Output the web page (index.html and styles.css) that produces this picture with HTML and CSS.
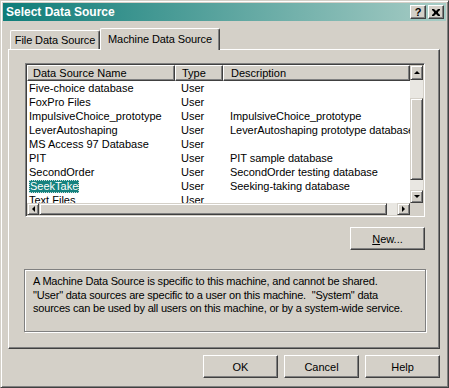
FILE: index.html
```html
<!DOCTYPE html>
<html lang="en">
<head>
  <meta charset="UTF-8">
  <title>Select Data Source</title>
  <link rel="stylesheet" href="styles.css">
</head>
<body>
  <div class="window">
    <div class="titlebar">
      <span class="title">Select Data Source</span>
      <div class="caption-buttons">
        <div class="cap-btn help">?</div>
        <div class="cap-btn">
          <svg width="8" height="7" viewBox="0 0 8 7"><path d="M0 0h2l2 2 2-2h2v1l-2 2v1l2 2v1h-2l-2-2-2 2h-2v-1l2-2v-1l-2-2z" fill="#000"/></svg>
        </div>
      </div>
    </div>

    <div class="client">
      <div class="tabs">
        <div class="tab">File Data Source</div>
        <div class="tab active">Machine Data Source</div>
      </div>

      <div class="tab-page">
        <div class="listview">
          <div class="lv-body">
            <div class="lv-header">
              <div class="hcell col-name">Data Source Name</div>
              <div class="hcell col-type">Type</div>
              <div class="hcell col-desc">Description</div>
            </div>
            <div class="lv-row"><span class="col-name">Five-choice database</span><span class="col-type">User</span><span class="col-desc"></span></div>
            <div class="lv-row"><span class="col-name">FoxPro Files</span><span class="col-type">User</span><span class="col-desc"></span></div>
            <div class="lv-row"><span class="col-name">ImpulsiveChoice_prototype</span><span class="col-type">User</span><span class="col-desc">ImpulsiveChoice_prototype</span></div>
            <div class="lv-row"><span class="col-name">LeverAutoshaping</span><span class="col-type">User</span><span class="col-desc">LeverAutoshaping prototype database</span></div>
            <div class="lv-row"><span class="col-name">MS Access 97 Database</span><span class="col-type">User</span><span class="col-desc"></span></div>
            <div class="lv-row"><span class="col-name">PIT</span><span class="col-type">User</span><span class="col-desc">PIT sample database</span></div>
            <div class="lv-row"><span class="col-name">SecondOrder</span><span class="col-type">User</span><span class="col-desc">SecondOrder testing database</span></div>
            <div class="lv-row"><span class="col-name"><span class="selected">SeekTake</span></span><span class="col-type">User</span><span class="col-desc">Seeking-taking database</span></div>
            <div class="lv-row"><span class="col-name">Text Files</span><span class="col-type">User</span><span class="col-desc"></span></div>
          </div>

          <div class="vscroll">
            <div class="sb-btn"><span class="arrow up"></span></div>
            <div class="sb-track v">
              <div class="sb-thumb v"></div>
            </div>
            <div class="sb-btn"><span class="arrow down"></span></div>
          </div>

          <div class="hscroll">
            <div class="sb-btn"><span class="arrow left"></span></div>
            <div class="sb-thumb h"></div>
            <div class="sb-track h"></div>
            <div class="sb-btn"><span class="arrow right"></span></div>
          </div>

          <div class="sb-corner"></div>
        </div>

        <div class="new-row">
          <div class="btn"><u>N</u>ew...</div>
        </div>

        <div class="groupbox">
          A Machine Data Source is specific to this machine, and cannot be shared.<br>
          "User" data sources are specific to a user on this machine.&nbsp; "System" data<br>
          sources can be used by all users on this machine, or by a system-wide service.
        </div>
      </div>

      <div class="dialog-buttons">
        <div class="btn">OK</div>
        <div class="btn">Cancel</div>
        <div class="btn">Help</div>
      </div>
    </div>
  </div>
</body>
</html>
```

FILE: styles.css
```css
* {
  margin: 0;
  padding: 0;
  box-sizing: border-box;
}

:root {
  --face: #d4d0c8;
  --shadow: #808080;
  --dark: #404040;
  --light: #ffffff;
  --track: #e9e7e2;
  --select: #16827e;
}

body {
  background-color: var(--face);
  font-family: 'Liberation Sans', Arial, sans-serif;
  font-size: 11px;
  color: #000;
  overflow: hidden;
}

.window {
  width: 449px;
  height: 388px;
  background-color: var(--face);
  border: 1px solid;
  border-color: var(--face) var(--dark) var(--dark) var(--face);
  box-shadow: inset 1px 1px var(--light), inset -1px -1px var(--shadow);
  padding: 2px;
}

/* title bar */
.titlebar {
  height: 18px;
  display: flex;
  align-items: center;
  justify-content: space-between;
  padding: 0 2px 0 3px;
  background: linear-gradient(to right, #0f7d79, #a7ccc5);
}

.title {
  color: #fff;
  font-weight: bold;
  font-size: 12px;
}

.caption-buttons {
  display: flex;
  gap: 2px;
}

.cap-btn {
  width: 16px;
  height: 14px;
  display: flex;
  align-items: center;
  justify-content: center;
  background-color: var(--face);
  border: 1px solid;
  border-color: var(--light) var(--dark) var(--dark) var(--light);
  box-shadow: inset -1px -1px var(--shadow);
}

.cap-btn.help {
  font-weight: bold;
  font-size: 11px;
  line-height: 12px;
}

/* client area */
.client {
  padding: 6px 6px 0 5px;
}

.tabs {
  height: 22px;
  display: flex;
  align-items: flex-end;
  position: relative;
  z-index: 1;
}

.tab {
  height: 19px;
  width: 90px;
  margin-left: 2px;
  text-align: center;
  line-height: 18px;
  letter-spacing: -0.1px;
  background-color: var(--face);
  border: 1px solid;
  border-bottom: none;
  border-color: var(--light) var(--dark) var(--face) var(--light);
  border-radius: 2px 2px 0 0;
  box-shadow: inset -1px 0 var(--shadow);
}

.tab.active {
  width: 120px;
  height: 22px;
  margin-left: 0;
  margin-bottom: -1px;
  line-height: 20px;
}

.tab-page {
  width: 432px;
  height: 300px;
  border: 1px solid;
  border-color: var(--light) var(--dark) var(--dark) var(--light);
  box-shadow: inset -1px -1px var(--shadow);
  padding: 13px 14px 0 16px;
  display: flex;
  flex-direction: column;
}

/* list view */
.listview {
  width: 400px;
  height: 154px;
  background-color: #fff;
  border: 1px solid;
  border-color: var(--shadow) var(--light) var(--light) var(--shadow);
  box-shadow: inset 1px 1px var(--dark), inset -1px -1px var(--face);
  padding: 1px;
  display: grid;
  grid-template-columns: 383px 13px;
  grid-template-rows: 138px 12px;
}

.lv-body {
  overflow: hidden;
  white-space: nowrap;
}

.lv-header {
  display: flex;
  height: 16px;
}

.hcell {
  height: 16px;
  line-height: 14px;
  background-color: var(--face);
  border: 1px solid;
  border-color: var(--light) var(--dark) var(--dark) var(--light);
  box-shadow: inset -1px -1px var(--shadow);
  padding-left: 5px;
}

.col-name { width: 148px; }
.col-type { width: 48px; }
.col-desc { width: 187px; }

.hcell.col-type { padding-left: 6px; }
.hcell.col-desc { padding-left: 7px; }

.lv-row {
  display: flex;
  height: 14px;
  line-height: 14px;
}

.lv-row span {
  display: block;
  overflow: hidden;
}

.lv-row .col-name { padding-left: 2px; }
.lv-row .col-type { padding-left: 6px; }
.lv-row .col-desc { padding-left: 7px; letter-spacing: -0.05px; }

.lv-row .selected {
  display: inline-block;
  height: 13px;
  line-height: 12px;
  margin-top: 1px;
  padding: 0 1px;
  background-color: var(--select);
  color: #fff;
  outline: 1px dotted #c8e0dc;
  outline-offset: -1px;
}

/* scroll bars */
.vscroll {
  display: flex;
  flex-direction: column;
}

.hscroll {
  display: flex;
}

.sb-btn {
  width: 13px;
  height: 13px;
  flex: none;
  display: flex;
  align-items: center;
  justify-content: center;
  background-color: var(--face);
  border: 1px solid;
  border-color: var(--face) var(--dark) var(--dark) var(--face);
  box-shadow: inset 1px 1px var(--light), inset -1px -1px var(--shadow);
}

.hscroll .sb-btn {
  width: 12px;
  height: 12px;
}

.hscroll .sb-btn:last-child {
  width: 13px;
}

.vscroll .sb-btn:first-child {
  height: 15px;
}

.sb-track {
  background-color: var(--track);
}

.sb-track.v {
  flex: 1;
  padding-top: 18px;
}

.sb-track.h {
  width: 10px;
}

.sb-thumb {
  background-color: var(--face);
  border: 1px solid;
  border-color: var(--face) var(--dark) var(--dark) var(--face);
  box-shadow: inset 1px 1px var(--light), inset -1px -1px var(--shadow);
}

.sb-thumb.v {
  height: 82px;
}

.sb-thumb.h {
  width: 348px;
}

.sb-corner {
  background-color: var(--face);
}

.arrow {
  width: 0;
  height: 0;
  border: 3px solid transparent;
}

.arrow.up { border-bottom: 3px solid #000; border-top-width: 0; }
.arrow.down { border-top: 3px solid #000; border-bottom-width: 0; }
.arrow.left { border-right: 3px solid #000; border-left-width: 0; }
.arrow.right { border-left: 3px solid #000; border-right-width: 0; }

/* buttons */
.btn {
  width: 75px;
  height: 23px;
  display: flex;
  align-items: center;
  justify-content: center;
  background-color: var(--face);
  border: 1px solid;
  border-color: var(--light) var(--dark) var(--dark) var(--light);
  box-shadow: inset -1px -1px var(--shadow);
}

.new-row {
  display: flex;
  justify-content: flex-end;
  margin-top: 10px;
}

.groupbox {
  width: 402px;
  height: 63px;
  margin: 19px 0 0 -1px;
  border: 1px solid var(--shadow);
  box-shadow: inset 1px 1px var(--light), 1px 1px var(--light);
  padding: 5px 0 0 8px;
  line-height: 13.5px;
  letter-spacing: -0.2px;
  white-space: nowrap;
}

.dialog-buttons {
  display: flex;
  justify-content: flex-end;
  gap: 6px;
  margin-top: 6px;
}
```
